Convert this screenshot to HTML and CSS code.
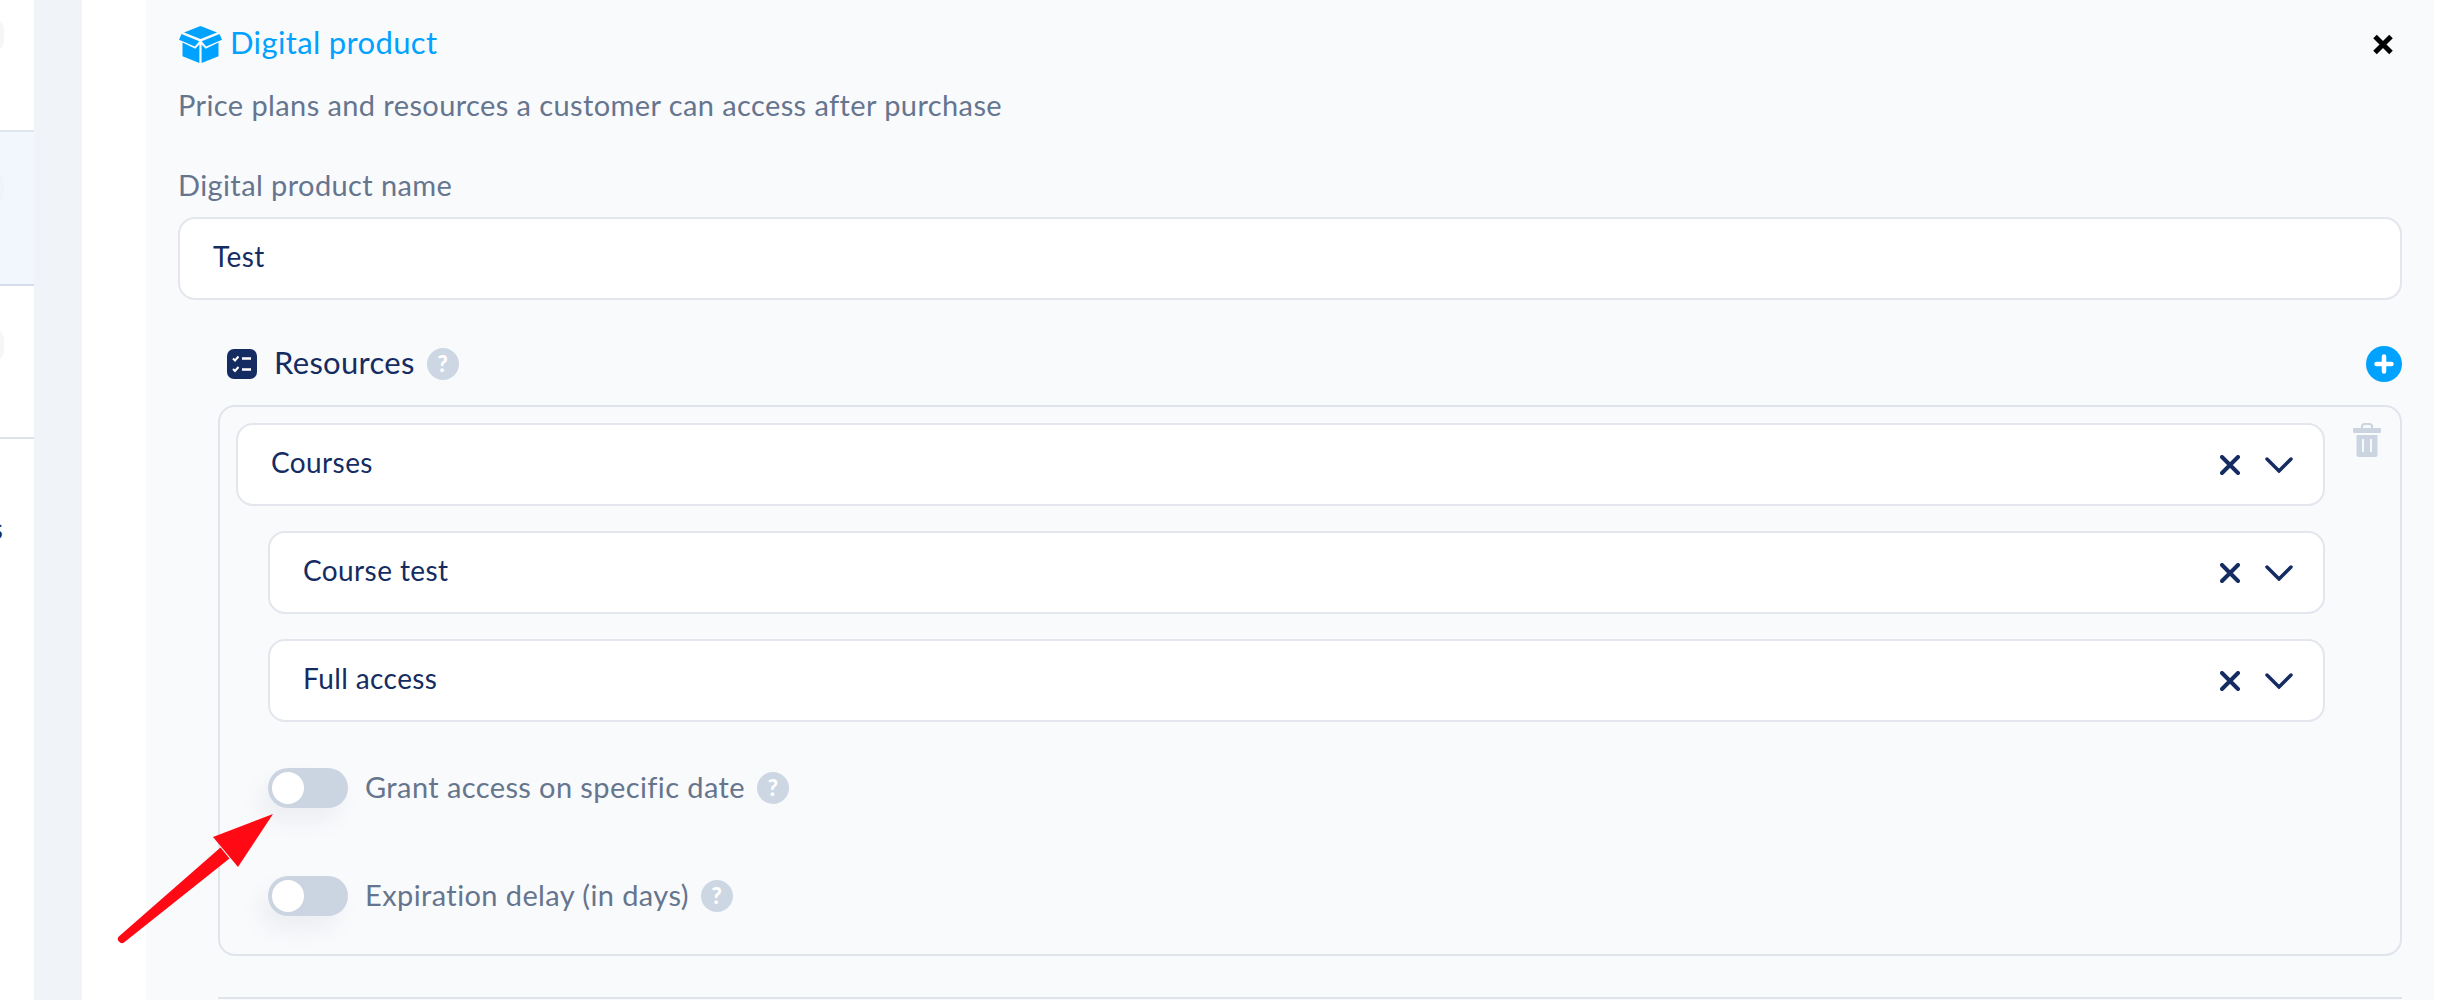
FILE: index.html
```html
<!DOCTYPE html>
<html lang="en">
<head>
  <meta charset="UTF-8" />
  <title>Digital product</title>
  <link rel="stylesheet" href="styles.css">
</head>
<body>

<div class="page">
  <div class="sidebar">
    <div class="side-item"><span class="side-dot"></span></div>
    <div class="side-item active"><span class="side-dot"></span></div>
    <div class="side-item last"><span class="side-dot"></span></div>
    <div class="side-label">Products</div>
  </div>
  <div class="gutter"></div>
  <div class="spacer"></div>

  <div class="panel">
    <div class="panel-head">
      <svg class="box-icon" viewBox="0 0 43 37">
        <path d="M21.5 0 38 6.5 21.5 13 5 6.5z"/>
        <path d="M2.5 8 20.3 15.3 15.8 20.6 0 13.8zM40.5 8 22.7 15.3 27.2 20.6 43 13.8z"/>
        <path d="M3.5 16.6 16.3 22.8 20.4 18.4V37L3.5 30.2zM39.5 16.6 26.7 22.8 22.6 18.4V37L39.5 30.2z"/>
      </svg>
      <span class="panel-title">Digital product</span>
      <svg class="close-icon" viewBox="0 0 20 21"><path d="M2 2.500 18 18.500M18 2.500 2 18.500"/></svg>
    </div>
    <div class="panel-sub">Price plans and resources a customer can access after purchase</div>

    <label class="field-label">Digital product name</label>
    <div class="row name-input">Test</div>

    <div class="res-head">
      <svg class="res-icon" viewBox="0 0 30 30">
        <rect width="30" height="30" rx="7" fill="#152c62"/>
        <path d="M6 9.500 8 11.500 11.500 7.500M6 20 8 22 11.500 18" fill="none" stroke="#fff" stroke-width="2"/>
        <path d="M15 9.500H24M15 20.500H24" fill="none" stroke="#fff" stroke-width="2.400"/>
      </svg>
      <span class="res-title">Resources</span>
      <span class="help">?</span>
      <svg class="plus-icon" viewBox="0 0 36 36">
        <circle cx="18" cy="18" r="18" fill="#00a2ff"/>
        <path d="M18 10.500V25.500M10.500 18H25.500" stroke="#fff" stroke-width="4.500" stroke-linecap="round"/>
      </svg>
    </div>

    <div class="res-box">
      <div class="res-main">
        <div class="row">
          <span>Courses</span>
          <span class="row-icons">
            <svg class="x-icon" viewBox="0 0 20 20"><path d="M2 2 18 18M18 2 2 18"/></svg>
            <svg class="chev-icon" viewBox="0 0 28 16"><path d="M2 2 14 14 26 2"/></svg>
          </span>
        </div>
        <div class="row nested">
          <span>Course test</span>
          <span class="row-icons">
            <svg class="x-icon" viewBox="0 0 20 20"><path d="M2 2 18 18M18 2 2 18"/></svg>
            <svg class="chev-icon" viewBox="0 0 28 16"><path d="M2 2 14 14 26 2"/></svg>
          </span>
        </div>
        <div class="row nested">
          <span>Full access</span>
          <span class="row-icons">
            <svg class="x-icon" viewBox="0 0 20 20"><path d="M2 2 18 18M18 2 2 18"/></svg>
            <svg class="chev-icon" viewBox="0 0 28 16"><path d="M2 2 14 14 26 2"/></svg>
          </span>
        </div>

        <div class="switch-row first">
          <span class="switch"><span class="knob"></span></span>
          <span class="switch-label">Grant access on specific date</span>
          <span class="help">?</span>
        </div>
        <div class="switch-row">
          <span class="switch"><span class="knob"></span></span>
          <span class="switch-label">Expiration delay (in days)</span>
          <span class="help">?</span>
        </div>
      </div>
      <svg class="trash-icon" viewBox="0 0 28 34">
        <path d="M9 5V3.500Q9 1 11.500 1H16.500Q19 1 19 3.500V5" fill="none" stroke="#cbd5e1" stroke-width="2"/>
        <rect y="5" width="28" height="5" rx="1" fill="#cbd5e1"/>
        <path d="M3.500 12H24.500V31.500Q24.500 34 22 34H6Q3.500 34 3.500 31.500z" fill="#cbd5e1"/>
        <path d="M10 16V29M18 16V29" stroke="#f9fafc" stroke-width="2"/>
      </svg>
    </div>

    <div class="divider"></div>
  </div>
  <div class="edge"></div>
</div>

<svg class="arrow" viewBox="0 0 170 140">
  <path d="M5.400 125.900 106.500 37.600 115.500 48.400 10.600 132.100A4 4 0 0 1 5.400 125.900z" fill="#ff0a14"/>
  <path d="M159 4 99 27 124 57z" fill="#ff0a14"/>
</svg>

</body>
</html>
```

FILE: styles.css
```css
html, body {
  margin: 0;
  height: 100%;
  overflow: hidden;
}

body {
  font-family: 'Lato', 'Open Sans', sans-serif;
  background: #fff;
  color: #152c62;
}

.page {
  display: flex;
  height: 1000px;
  overflow: hidden;
}

/* left sidebar, only a sliver is visible */
.sidebar {
  width: 34px;
  flex: none;
  overflow: hidden;
  background: #fff;
}

.side-item {
  height: 132px;
  padding-top: 19px;
  border-bottom: 2px solid #e0e5ee;
  box-sizing: border-box;
}

.side-item.active {
  height: 154px;
  padding-top: 40px;
  background: #f2f7fe;
  border-bottom-color: #d5ddec;
}

.side-item.last {
  height: 153px;
  padding-top: 43px;
  border-bottom-color: #dde1e8;
}

.side-dot {
  display: block;
  width: 34px;
  height: 32px;
  margin-left: -30px;
  border-radius: 10px;
  background: #f5f6f8;
}

.active .side-dot {
  background: #f0f4fa;
}

.side-label {
  margin: 72px 0 0 -107px;
  width: 110px;
  text-align: right;
  font-size: 28px;
  line-height: 34px;
}

.gutter {
  width: 48px;
  flex: none;
  background: #f0f4f9;
}

.spacer {
  width: 64px;
  flex: none;
}

.edge {
  width: 4px;
  flex: none;
}

.panel {
  flex: 1;
  background: #f9fafc;
  padding: 26px 32px 0;
  min-width: 0;
}

.panel-head {
  display: flex;
  align-items: center;
  height: 37px;
}

.box-icon {
  width: 43px;
  height: 37px;
  fill: #00a2ff;
  margin-left: 1px;
}

.panel-title {
  margin: 0 0 6px 8px;
  font-size: 31px;
  letter-spacing: 0.35px;
  color: #00a2ff;
}

.close-icon {
  width: 20px;
  height: 21px;
  margin-left: auto;
  margin-right: 9px;
  fill: none;
  stroke: #000;
  stroke-width: 5;
}

.panel-sub {
  margin-top: 22px;
  font-size: 29px;
  line-height: 40px;
  letter-spacing: 0.4px;
  color: #66758e;
}

.field-label {
  display: block;
  margin-top: 40px;
  font-size: 29px;
  line-height: 40px;
  letter-spacing: 0.4px;
  color: #66758e;
}

.row {
  display: flex;
  align-items: center;
  justify-content: space-between;
  height: 83px;
  padding: 0 30px 0 33px;
  box-sizing: border-box;
  background: #fff;
  border: 2px solid #e3e6ec;
  border-radius: 17px;
  font-size: 28px;
  letter-spacing: 0.4px;
  color: #152c62;
}

.row > span:first-child {
  margin-bottom: 6px;
}

.name-input {
  margin-top: 12px;
  padding-bottom: 6px;
}

.res-head {
  display: flex;
  align-items: center;
  height: 36px;
  margin-top: 46px;
  padding-left: 49px;
}

.res-icon {
  width: 30px;
  height: 30px;
}

.res-title {
  margin: 0 0 4px 17px;
  font-size: 31px;
  letter-spacing: 0.3px;
  color: #152c62;
}

.help {
  width: 32px;
  height: 32px;
  margin-left: 12px;
  flex: none;
  border-radius: 50%;
  background: #cdd7e3;
  color: #fff;
  font-size: 22px;
  font-weight: 900;
  line-height: 32px;
  text-align: center;
}

.plus-icon {
  width: 36px;
  height: 36px;
  margin-left: auto;
}

.res-box {
  display: flex;
  align-items: flex-start;
  margin-top: 23px;
  margin-left: 40px;
  padding: 16px 19px 38px 16px;
  background: #f9fafc;
  border: 2px solid #e0e5ec;
  border-radius: 17px;
}

.res-main {
  flex: 1;
  min-width: 0;
}

.res-box .row.nested {
  margin-top: 25px;
  margin-left: 32px;
}

.row-icons {
  display: flex;
  align-items: center;
  gap: 25px;
}

.x-icon {
  width: 20px;
  height: 20px;
  fill: none;
  stroke: #152c62;
  stroke-width: 4;
  stroke-linecap: round;
}

.chev-icon {
  width: 28px;
  height: 16px;
  fill: none;
  stroke: #152c62;
  stroke-width: 3.500;
  stroke-linecap: round;
}

.trash-icon {
  width: 28px;
  height: 34px;
  margin-left: 28px;
  flex: none;
}

.switch-row {
  display: flex;
  align-items: center;
  height: 40px;
  margin-top: 68px;
  margin-left: 32px;
  font-size: 29px;
  letter-spacing: 0.4px;
  color: #66758e;
}

.switch-row.first {
  margin-top: 46px;
}

.switch {
  display: flex;
  align-items: center;
  width: 80px;
  height: 40px;
  padding: 0 4px;
  box-sizing: border-box;
  flex: none;
  border-radius: 20px;
  background: #cbd5e1;
  box-shadow: -8px 14px 20px rgba(100, 116, 139, 0.08);
}

.knob {
  width: 32px;
  height: 32px;
  border-radius: 50%;
  background: #fff;
}

.switch-label {
  margin: 0 0 4px 17px;
}

.divider {
  height: 2px;
  margin-top: 41px;
  margin-left: 40px;
  background: #e0e5ec;
}

/* red annotation drawn over the screenshot */
.arrow {
  position: absolute;
  left: 114px;
  top: 810px;
  width: 170px;
  height: 140px;
}
```
